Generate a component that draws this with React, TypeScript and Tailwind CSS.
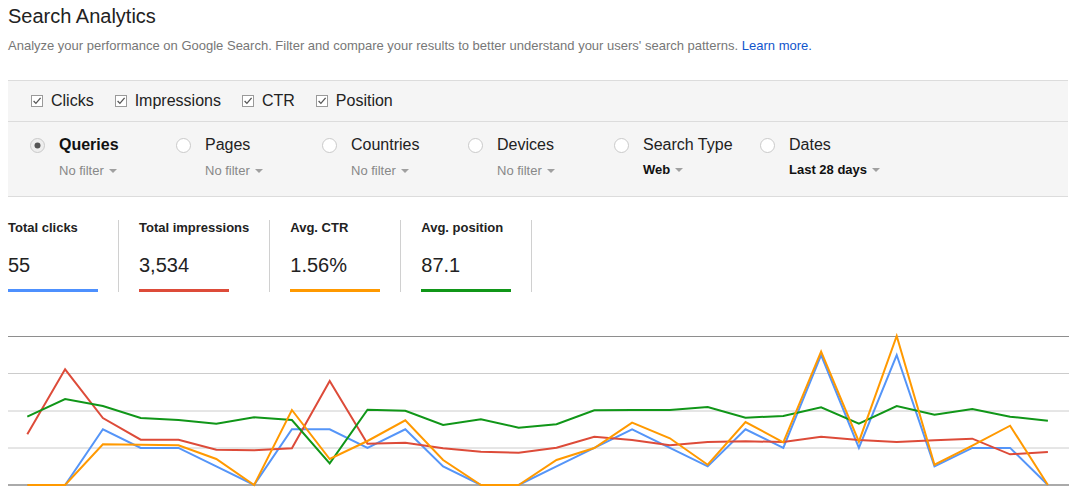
import React from "react";

const blueC = [0,0,3,2,2,1,0,3,3,2,3,1,0,0,1,2,3,2,1,3,2,7,2,7,1,2,2,0];
const blue = blueC.map((c) => 485 - c * 18.57);
const red = [434.3,369.3,418,439.7,439.7,449.7,450.3,448.3,381,443.7,442.7,448.3,451.7,452.7,447.7,436.7,440,445.3,442,441.3,442,436.7,440,442,440.3,438.7,454.3,452];
const green = [416.7,399,406,418,420,423.7,417.3,420,463.3,409.7,410.7,425,419.3,427.7,424.3,410.3,410,410,407,417.7,416,407.3,423.7,406,414.7,409,416.7,420.7];
const orange = [485,485,444.3,444.7,445.3,459,485,410,459,441,420.3,460,485,485,460,448,422.7,438.3,464.7,422,442.3,351.7,441.7,336,464.7,445.7,425.7,485];

const pts = (ys: number[]) =>
  ys.map((y, i) => `${(27.3 + 37.8 * i).toFixed(1)},${(y - 330).toFixed(1)}`).join(" ");

function Check() {
  return (
    <svg width="12" height="12" viewBox="0 0 12 12" className="shrink-0">
      <rect x="0.5" y="0.5" width="11" height="11" fill="#fff" stroke="#9a9a9a" />
      <path d="M2.6 6 L4.9 8.4 L9.6 2.8" fill="none" stroke="#555" strokeWidth="1.3" />
    </svg>
  );
}

function Radio({ on }: { on?: boolean }) {
  return (
    <svg width="15" height="15" viewBox="0 0 15 15" className="shrink-0">
      <circle cx="7.5" cy="7.5" r="7" fill={on ? "#eeeeee" : "#ffffff"} stroke="#c9c9c9" />
      {on && <circle cx="7.5" cy="7.5" r="3" fill="#555" />}
    </svg>
  );
}

function Arrow() {
  return (
    <span className="ml-[5px] inline-block h-0 w-0 border-x-[4px] border-t-[4px] border-x-transparent border-t-[#a0a0a0] align-middle" />
  );
}

const dims: { label: string; sub: string; on?: boolean; bold?: boolean }[] = [
  { label: "Queries", sub: "No filter", on: true },
  { label: "Pages", sub: "No filter" },
  { label: "Countries", sub: "No filter" },
  { label: "Devices", sub: "No filter" },
  { label: "Search Type", sub: "Web", bold: true },
  { label: "Dates", sub: "Last 28 days", bold: true },
];

const stats = [
  { label: "Total clicks", value: "55", color: "bg-[#4d90fe]" },
  { label: "Total impressions", value: "3,534", color: "bg-[#dd4b39]" },
  { label: "Avg. CTR", value: "1.56%", color: "bg-[#ff9900]" },
  { label: "Avg. position", value: "87.1", color: "bg-[#109618]" },
];

export default function App() {
  return (
    <div className="h-[498px] w-[1088px] overflow-hidden bg-white font-['Liberation_Sans',Arial,sans-serif] text-[#222]">
      <div className="pl-2 pr-5">
        <h1 className="pt-1 text-[20px] font-normal leading-[24px] text-[#222]">Search Analytics</h1>
        <p className="mt-[10px] text-[13px] leading-[16px] text-[#777]">
          Analyze your performance on Google Search. Filter and compare your results to better understand your users' search patterns.{" "}
          <a className="text-[#1155cc]">Learn more.</a>
        </p>

        <div className="mt-[26px] border-y border-[#dcdcdc] bg-[#f5f5f5]">
          <div className="flex h-[40px] items-center gap-[21px] pl-[23px] text-[16px] text-[#222]">
            {["Clicks", "Impressions", "CTR", "Position"].map((t) => (
              <div key={t} className="flex items-center gap-2">
                <Check />
                <span className="leading-[20px]">{t}</span>
              </div>
            ))}
          </div>
          <div className="flex h-[75px] border-t border-[#dcdcdc] pl-[22px] pt-[13px]">
            {dims.map((d) => (
              <div key={d.label} className="flex w-[146px] gap-[14px]">
                <div className="pt-[3px]">
                  <Radio on={d.on} />
                </div>
                <div className="flex flex-col">
                  <span className={`text-[16px] leading-[20px] ${d.on ? "font-bold text-[#111]" : "text-[#222]"}`}>
                    {d.label}
                  </span>
                  <span
                    className={`flex items-center text-[13px] leading-[16px] ${
                      d.bold ? "mt-[7px] font-bold text-[#111]" : "mt-[8px] text-[#888]"
                    }`}
                  >
                    {d.sub}
                    <Arrow />
                  </span>
                </div>
              </div>
            ))}
          </div>
        </div>

        <div className="mt-[23px] flex">
          {stats.map((s, i) => (
            <div
              key={s.label}
              className={`flex h-[72px] flex-col border-r border-[#d0d0d0] pr-5 ${i === 0 ? "pl-0" : "pl-5"}`}
            >
              <span className="text-[13px] font-bold leading-[16px] text-[#222]">{s.label}</span>
              <span className="mt-[17px] text-[20px] leading-[24px] text-[#222]">{s.value}</span>
              <div className={`mt-[12px] h-[3px] w-[90px] ${s.color}`} />
            </div>
          ))}
        </div>
      </div>

      <svg width="1088" height="168" viewBox="0 0 1088 168" className="mt-[38px] block">
        {[43.5, 81, 118].map((y) => (
          <line key={y} x1="8" x2="1069" y1={y} y2={y} stroke="#cccccc" strokeWidth="1" />
        ))}
        <line x1="8" x2="1069" y1="6.5" y2="6.5" stroke="#8e8e8e" strokeWidth="1" />
        <line x1="8" x2="1069" y1="155" y2="155" stroke="#8e8e8e" strokeWidth="1.3" />
        <polyline points={pts(blue)} fill="none" stroke="#5595f8" strokeWidth="2" strokeLinejoin="miter" />
        <polyline points={pts(red)} fill="none" stroke="#dd4b39" strokeWidth="2" />
        <polyline points={pts(green)} fill="none" stroke="#109618" strokeWidth="2" />
        <polyline points={pts(orange)} fill="none" stroke="#ff9900" strokeWidth="2" />
      </svg>
    </div>
  );
}
